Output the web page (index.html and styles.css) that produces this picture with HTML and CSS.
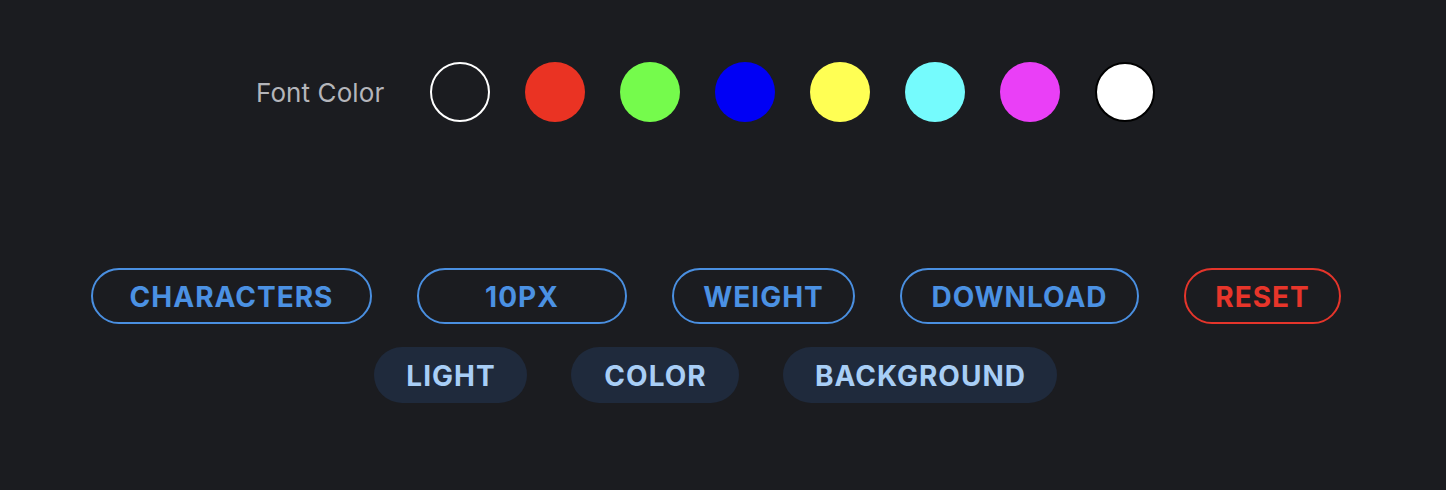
FILE: index.html
```html
<!DOCTYPE html>
<html lang="en">
<head>
<meta charset="utf-8">
<title>Font Color</title>
<link rel="stylesheet" href="styles.css">
</head>
<body>
<main class="panel">
  <section class="color-row">
    <span class="color-label">Font Color</span>
    <div class="swatches">
      <button class="swatch swatch-none" aria-label="none"></button>
      <button class="swatch swatch-red" aria-label="red"></button>
      <button class="swatch swatch-green" aria-label="green"></button>
      <button class="swatch swatch-blue" aria-label="blue"></button>
      <button class="swatch swatch-yellow" aria-label="yellow"></button>
      <button class="swatch swatch-cyan" aria-label="cyan"></button>
      <button class="swatch swatch-magenta" aria-label="magenta"></button>
      <button class="swatch swatch-white" aria-label="white"></button>
    </div>
  </section>
  <section class="actions">
    <div class="action-row">
      <button class="btn btn-outline w-characters">CHARACTERS</button>
      <button class="btn btn-outline w-size">10PX</button>
      <button class="btn btn-outline w-weight">WEIGHT</button>
      <button class="btn btn-outline w-download">DOWNLOAD</button>
      <button class="btn btn-danger w-reset">RESET</button>
    </div>
    <div class="action-row action-row-soft">
      <button class="btn btn-soft w-light">LIGHT</button>
      <button class="btn btn-soft w-color">COLOR</button>
      <button class="btn btn-soft w-background">BACKGROUND</button>
    </div>
  </section>
</main>
</body>
</html>
```
FILE: styles.css
```css
html, body {
  margin: 0;
  padding: 0;
  background: #1b1c20;
  height: 100%;
}

body {
  font-family: Inter, "Noto Sans", "Liberation Sans", sans-serif;
}

.panel {
  padding-top: 62px;
}

.color-row {
  display: flex;
  align-items: center;
  padding-left: 256px;
  height: 60px;
}

.color-label {
  color: #b4b5ba;
  font-size: 26px;
  font-weight: 400;
  letter-spacing: 0.1px;
  margin-right: 46px;
}

.swatches {
  display: flex;
  gap: 35px;
}

.swatch {
  width: 60px;
  height: 60px;
  border-radius: 50%;
  border: none;
  padding: 0;
  box-sizing: border-box;
}

.swatch-none { background: transparent; border: 2px solid #ffffff; }
.swatch-red { background: #ea3323; }
.swatch-green { background: #75fb4c; }
.swatch-blue { background: #0000f5; }
.swatch-yellow { background: #ffff54; }
.swatch-cyan { background: #75fbfd; }
.swatch-magenta { background: #ea3ff7; }
.swatch-white { background: #ffffff; border: 2px solid #000000; }

.actions {
  margin-top: 146px;
  display: flex;
  flex-direction: column;
  gap: 23px;
  padding-right: 15px;
}

.action-row {
  display: flex;
  justify-content: center;
  gap: 45px;
}

.action-row-soft {
  gap: 44px;
}

.btn {
  height: 56px;
  box-sizing: border-box;
  border-radius: 28px;
  font-family: Inter, "Noto Sans", "Liberation Sans", sans-serif;
  font-size: 28px;
  font-weight: 700;
  letter-spacing: 1px;
  padding: 2px 0 0 1px;
  display: flex;
  align-items: center;
  justify-content: center;
  background: transparent;
}

.btn-outline {
  border: 2px solid #4a8fe0;
  color: #4b91e3;
}

.btn-danger {
  border: 2px solid #e5352b;
  color: #e7352a;
}

.btn-soft {
  border: none;
  background: #1f2a3c;
  color: #a8cef6;
}

.w-characters { width: 281px; }
.w-size { width: 210px; }
.w-weight { width: 183px; }
.w-download { width: 239px; }
.w-reset { width: 157px; }
.w-light { width: 153px; }
.w-color { width: 168px; }
.w-background { width: 274px; }
```
